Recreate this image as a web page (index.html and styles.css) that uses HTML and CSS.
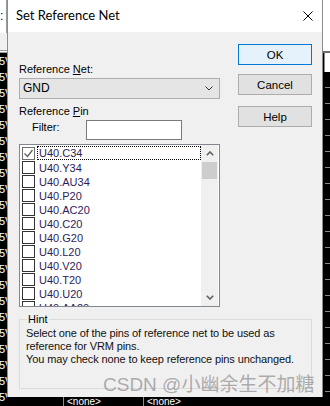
FILE: index.html
```html
<!doctype html>
<html lang="en">
<head>
    <meta charset="UTF-8">
    <title>Set Reference Net</title>
    <link rel="stylesheet" href="styles.css">
</head>
<body>
    <div class="screen">
        <div class="sheet-left">
            <div class="sheet-head"><span class="colon">:</span></div>
            <div class="sheet-band"></div>
            <div class="sheet-rule"></div>
            <div class="sheet-rows">
                <div class="sheet-row">5V</div>
                <div class="sheet-row">5V</div>
                <div class="sheet-row">5V</div>
                <div class="sheet-row">5V</div>
                <div class="sheet-row">5V</div>
                <div class="sheet-row">5V</div>
                <div class="sheet-row">5V</div>
                <div class="sheet-row">5V</div>
                <div class="sheet-row">5V</div>
                <div class="sheet-row">5V</div>
                <div class="sheet-row">5V</div>
                <div class="sheet-row">5V</div>
                <div class="sheet-row">5V</div>
                <div class="sheet-row">5V</div>
                <div class="sheet-row">5V</div>
                <div class="sheet-row">5V</div>
                <div class="sheet-row">5V</div>
                <div class="sheet-row">5V</div>
                <div class="sheet-row">5V</div>
                <div class="sheet-row">5V</div>
                <div class="sheet-row">5V</div>
                <div class="sheet-row">5V</div>
            </div>
        </div>

        <div class="dialog">
            <div class="titlebar">
                <span class="title">Set Reference Net</span>
                <svg class="close" width="10" height="10" viewBox="0 0 10 10">
                    <path d="M0.5 0.5 L9.5 9.5 M9.5 0.5 L0.5 9.5" stroke="#000" stroke-width="1" fill="none"/>
                </svg>
            </div>

            <div class="dialog-body">
                <div class="top">
                    <div class="fields">
                        <div class="label">Reference <u>N</u>et:</div>
                        <div class="combo">
                            <span>GND</span>
                            <svg width="8" height="5" viewBox="0 0 8 5">
                                <polyline points="0.5,0.5 4,4 7.5,0.5" stroke="#333" stroke-width="1" fill="none"/>
                            </svg>
                        </div>

                        <div class="label pin-label">Reference <u>P</u>in</div>
                        <div class="filter-row">
                            <label for="filter" class="filter-label">Filter:</label>
                            <input type="text" id="filter" class="filter">
                        </div>

                        <div class="listbox">
                            <ul class="pin-list">
                                <li class="pin-item"><span class="box checked"><svg width="11" height="11" viewBox="0 0 11 11"><polyline points="1.5,5.5 4.5,8.5 9.5,2" stroke="#5f5f5f" stroke-width="1.3" fill="none"/></svg></span><span class="pin focused">U40.C34</span></li>
                                <li class="pin-item"><span class="box"></span><span class="pin">U40.Y34</span></li>
                                <li class="pin-item"><span class="box"></span><span class="pin">U40.AU34</span></li>
                                <li class="pin-item"><span class="box"></span><span class="pin">U40.P20</span></li>
                                <li class="pin-item"><span class="box"></span><span class="pin">U40.AC20</span></li>
                                <li class="pin-item"><span class="box"></span><span class="pin">U40.C20</span></li>
                                <li class="pin-item"><span class="box"></span><span class="pin">U40.G20</span></li>
                                <li class="pin-item"><span class="box"></span><span class="pin">U40.L20</span></li>
                                <li class="pin-item"><span class="box"></span><span class="pin">U40.V20</span></li>
                                <li class="pin-item"><span class="box"></span><span class="pin">U40.T20</span></li>
                                <li class="pin-item"><span class="box"></span><span class="pin">U40.U20</span></li>
                                <li class="pin-item"><span class="box"></span><span class="pin">U40.AA20</span></li>
                            </ul>
                            <div class="scrollbar">
                                <div class="scroll-arrow">
                                    <svg width="8" height="5" viewBox="0 0 8 5"><polyline points="0.8,4.2 4,1 7.2,4.2" stroke="#606060" stroke-width="1.6" fill="none"/></svg>
                                </div>
                                <div class="scroll-thumb"></div>
                                <div class="scroll-track"></div>
                                <div class="scroll-arrow">
                                    <svg width="8" height="5" viewBox="0 0 8 5"><polyline points="0.8,0.8 4,4 7.2,0.8" stroke="#606060" stroke-width="1.6" fill="none"/></svg>
                                </div>
                            </div>
                        </div>
                    </div>

                    <div class="buttons">
                        <button class="btn btn-default">OK</button>
                        <button class="btn">Cancel</button>
                        <button class="btn btn-help">Help</button>
                    </div>
                </div>

                <div class="hint">
                    <span class="hint-title">Hint</span>
                    <p>
                        Select one of the pins of reference net to be used as<br>
                        reference for VRM pins.<br>
                        You may check none to keep reference pins unchanged.
                    </p>
                </div>
            </div>
        </div>

        <div class="sheet-right">
            <div class="sheet-head"></div>
            <div class="sheet-cell"></div>
            <div class="sheet-lines">
                <div class="sheet-line"></div>
                <div class="sheet-line"></div>
                <div class="sheet-line"></div>
                <div class="sheet-line"></div>
                <div class="sheet-line"></div>
                <div class="sheet-line"></div>
                <div class="sheet-line"></div>
                <div class="sheet-line"></div>
                <div class="sheet-line"></div>
                <div class="sheet-line"></div>
                <div class="sheet-line"></div>
                <div class="sheet-line"></div>
                <div class="sheet-line"></div>
                <div class="sheet-line"></div>
                <div class="sheet-line"></div>
                <div class="sheet-line"></div>
                <div class="sheet-line"></div>
                <div class="sheet-line"></div>
                <div class="sheet-line"></div>
                <div class="sheet-line"></div>
            </div>
        </div>

        <div class="sheet-bottom">
            <div class="cell cell-first"></div>
            <div class="cell cell-mid">&lt;none&gt;</div>
            <div class="cell">&lt;none&gt;</div>
        </div>

        <div class="watermark">CSDN @小幽余生不加糖</div>
    </div>
</body>
</html>
```

FILE: styles.css
```css
body {
    margin: 0;
    padding: 0;
    font-family: 'Liberation Sans', Arial, sans-serif;
    font-size: 11px;
    line-height: 13px;
    color: #000;
}

.screen {
    position: relative;
    width: 330px;
    height: 406px;
    overflow: hidden;
    background-color: #000;
    display: grid;
    grid-template-columns: 7px 316px 7px;
    grid-template-rows: 397px 9px;
}

/* spreadsheet behind the dialog */
.sheet-left {
    grid-column: 1;
    grid-row: 1 / 3;
    display: flex;
    flex-direction: column;
    overflow: hidden;
}

.sheet-left .sheet-head {
    height: 33px;
    flex-shrink: 0;
    background-color: #fff;
    border-right: 1px solid #9a9a9a;
    box-sizing: border-box;
}

.colon {
    display: block;
    margin: 10px 0 0 0;
    font-size: 12px;
    line-height: 13px;
}

.sheet-band {
    height: 17px;
    flex-shrink: 0;
    background-color: #f0f0f0;
}

.sheet-rule {
    height: 1px;
    flex-shrink: 0;
    background-color: #fff;
    border-top: 1px solid #9a9a9a;
    border-bottom: 1px solid #9a9a9a;
}

.sheet-row {
    height: 16px;
    flex-shrink: 0;
    margin-left: -1px;
    color: #fff;
    font-size: 11px;
    line-height: 16px;
    white-space: nowrap;
}

.sheet-right {
    grid-column: 3;
    grid-row: 1 / 3;
    display: flex;
    flex-direction: column;
    overflow: hidden;
}

.sheet-right .sheet-head {
    height: 51px;
    flex-shrink: 0;
    background-color: #fff;
    border-bottom: 2px solid #6d6d6d;
}

.sheet-cell {
    height: 19px;
    flex-shrink: 0;
    margin-left: 1px;
    background-color: #fff;
    border-left: 1px solid #888;
}

.sheet-line {
    height: 16px;
    flex-shrink: 0;
    margin-left: 2px;
    border-bottom: 1px solid #8a8a8a;
    box-sizing: border-box;
}

.sheet-bottom {
    grid-column: 2;
    grid-row: 2;
    display: flex;
    color: #fff;
    font-size: 10px;
    line-height: 9px;
    overflow: hidden;
}

.cell {
    padding-left: 3px;
    white-space: nowrap;
}

.cell-first {
    width: 56px;
    padding: 0;
    border-right: 1px solid #8a8a8a;
}

.cell-mid {
    width: 76px;
    border-right: 1px solid #8a8a8a;
}

/* dialog */
.dialog {
    grid-column: 2;
    grid-row: 1;
    display: flex;
    flex-direction: column;
    background-color: #f0f0f0;
    border-left: 1px solid #8c8c8c;
    border-right: 1px solid #8c8c8c;
}

.titlebar {
    height: 31px;
    flex-shrink: 0;
    display: flex;
    align-items: center;
    justify-content: space-between;
    padding: 0 9px 1px 8px;
    background-color: #fff;
}

.title {
    font-family: Lato, 'Liberation Sans', sans-serif;
    font-size: 13px;
}

.close {
    display: block;
    margin-top: 1px;
}

.dialog-body {
    flex: 1;
    padding: 12px 10px 0 11px;
}

.top {
    display: flex;
    justify-content: space-between;
}

.fields {
    width: 201px;
    padding-top: 19px;
}

.label u {
    text-decoration-thickness: 1px;
    text-underline-offset: 1px;
}

.combo {
    height: 21px;
    margin-top: 2px;
    box-sizing: border-box;
    display: flex;
    align-items: center;
    justify-content: space-between;
    padding: 0 6px 0 3px;
    background-color: #e5e5e5;
    border: 1px solid #adadad;
    font-size: 12px;
}

.pin-label {
    margin-top: 6px;
}

.filter-row {
    display: flex;
    align-items: flex-start;
    margin-top: 2px;
}

.filter-label {
    width: 54px;
    margin: 1px 0 0 13px;
}

.filter {
    width: 96px;
    height: 20px;
    box-sizing: border-box;
    margin: 0;
    padding: 0;
    border: 1px solid #7a7a7a;
    background-color: #fff;
}

.listbox {
    height: 163px;
    margin-top: 4px;
    box-sizing: border-box;
    display: flex;
    border: 1px solid #828790;
    background-color: #fff;
    overflow: hidden;
}

.pin-list {
    width: 181px;
    margin: 0;
    padding: 1px 0 0 0;
    list-style: none;
}

.pin-item {
    height: 14px;
    display: flex;
    align-items: center;
}

.box {
    width: 13px;
    height: 13px;
    box-sizing: border-box;
    margin: 0 2px 0 2px;
    flex-shrink: 0;
    border: 1px solid #333;
    background-color: #fff;
}

.box.checked {
    border-color: #707070;
}

.box svg {
    display: block;
}

.pin {
    flex: 1;
    height: 14px;
    box-sizing: border-box;
    padding-left: 1px;
    line-height: 14px;
    color: #2c1c5c;
    border: 1px solid transparent;
}

.pin.focused {
    border: 1px dotted #000;
    line-height: 12px;
}

.scrollbar {
    width: 17px;
    display: flex;
    flex-direction: column;
    background-color: #f0f0f0;
}

.scroll-arrow {
    height: 17px;
    flex-shrink: 0;
    display: flex;
    align-items: center;
    justify-content: center;
}

.scroll-thumb {
    height: 17px;
    margin: 0 1px;
    background-color: #cdcdcd;
}

.scroll-track {
    flex: 1;
}

.buttons {
    width: 74px;
    display: flex;
    flex-direction: column;
}

.btn {
    height: 21px;
    margin: 0;
    padding: 0;
    font-family: 'Liberation Sans', Arial, sans-serif;
    font-size: 11.5px;
    color: #000;
    background-color: #e1e1e1;
    border: 1px solid #adadad;
}

.btn + .btn {
    margin-top: 9px;
}

.btn.btn-help {
    margin-top: 11px;
}

.btn-default {
    background-color: #e5f1fb;
    border-color: #0078d7;
}

.hint {
    position: relative;
    height: 70px;
    box-sizing: border-box;
    margin-top: 12px;
    padding: 7px 6px 0 6px;
    border: 1px solid #dcdcdc;
}

.hint-title {
    position: absolute;
    top: -7px;
    left: 7px;
    padding: 0 1px;
    background-color: #f0f0f0;
}

.hint p {
    margin: 0;
    color: #111;
    letter-spacing: -0.12px;
}

.watermark {
    position: absolute;
    left: 103px;
    top: 374px;
    font-family: 'Liberation Sans', 'Noto Sans CJK SC', sans-serif;
    font-size: 19px;
    line-height: 22px;
    color: rgba(110, 110, 110, 0.55);
    white-space: nowrap;
}
```
